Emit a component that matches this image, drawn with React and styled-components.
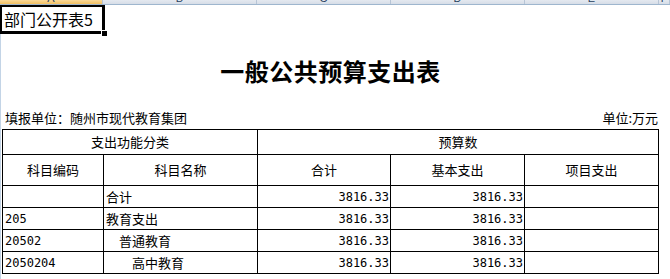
import React from 'react';
import styled, { createGlobalStyle } from 'styled-components';

const GlobalStyle = createGlobalStyle`
  html, body {
    margin: 0;
    padding: 0;
    background: #ffffff;
  }
  body {
    font-family: "Noto Sans CJK SC", "Noto Sans", sans-serif;
    color: #000;
  }
`;

const Page = styled.div`
  width: 670px;
  height: 279px;
  overflow: hidden;
  background: #fff;
`;

const HeaderStrip = styled.div`
  display: flex;
  height: 4px;
  border-bottom: 1px solid #9eb6ce;
  background: linear-gradient(#e4e9f0, #d6dde7);
  overflow: hidden;
`;

const ColHead = styled.div`
  width: ${p => p.$w}px;
  flex: none;
  display: flex;
  justify-content: center;
  align-items: flex-end;
  border-right: 1px solid #b7c5d6;
  background: ${p => (p.$active ? 'linear-gradient(#f9d99a, #f2c062)' : 'transparent')};
  font-family: "Liberation Sans", sans-serif;
  font-size: 11px;
  line-height: 11px;
  color: #27415f;
  overflow: hidden;
  box-sizing: border-box;
`;

const Sheet = styled.div`
  border-left: 1px solid #c3d4e6;
  padding-left: 1px;
  height: 274px;
`;

const TopRow = styled.div`
  height: 30px;
  margin-left: -2px;
`;

const ActiveCell = styled.div`
  position: relative;
  width: 98px;
  height: 24px;
  border: 2px solid #000;
  border-right-width: 3px;
  border-bottom-width: 3px;
  font-size: 16px;
  line-height: 24px;
  padding-left: 2px;
  white-space: nowrap;
`;

const FillHandle = styled.span`
  position: absolute;
  right: -6px;
  bottom: -6px;
  width: 5px;
  height: 5px;
  background: #000;
  border: 1px solid #fff;
`;

const Title = styled.h1`
  margin: 0;
  height: 70px;
  width: 657px;
  display: flex;
  align-items: center;
  justify-content: center;
  font-size: 24px;
  font-weight: 700;
  letter-spacing: 0.5px;
`;

const InfoRow = styled.div`
  width: 656px;
  height: 24px;
  display: flex;
  justify-content: space-between;
  align-items: center;
  font-size: 13px;
  padding-left: 3px;
  box-sizing: border-box;
`;

const Table = styled.table`
  border-collapse: collapse;
  table-layout: fixed;
  width: 657px;
  font-size: 13px;
`;

const Row = styled.tr`
  height: ${p => p.$h}px;
`;

const Cell = styled.td`
  border: 1px solid #000;
  padding: 0 ${p => (p.$align === 'right' ? 1 : 2)}px 0 ${p => 2 + (p.$indent || 0)}px;
  text-align: ${p => p.$align || 'left'};
  font-family: ${p =>
    p.$mono ? '"DejaVu Sans Mono", monospace' : '"Noto Sans CJK SC", sans-serif'};
  font-size: ${p => (p.$mono ? '12px' : '13px')};
  line-height: 16px;
  white-space: nowrap;
  overflow: hidden;
  vertical-align: middle;
`;

const HeadCell = styled(Cell).attrs({ as: 'th' })`
  font-weight: 400;
  text-align: center;
`;

const columns = [
  { key: 'A', w: 103, active: true },
  { key: 'B', w: 154 },
  { key: 'C', w: 134 },
  { key: 'D', w: 134 },
  { key: 'E', w: 134 },
  { key: 'F', w: 11 },
];

const rows = [
  { code: '', name: '合计', indent: 0, total: '3816.33', basic: '3816.33' },
  { code: '205', name: '教育支出', indent: 0, total: '3816.33', basic: '3816.33' },
  { code: '20502', name: '普通教育', indent: 13, total: '3816.33', basic: '3816.33' },
  { code: '2050204', name: '高中教育', indent: 26, total: '3816.33', basic: '3816.33' },
];

export default function App() {
  return (
    <Page>
      <GlobalStyle />
      <HeaderStrip>
        {columns.map(c => (
          <ColHead key={c.key} $w={c.w} $active={c.active}>
            {c.key}
          </ColHead>
        ))}
      </HeaderStrip>
      <Sheet>
        <TopRow>
          <ActiveCell>
            部门公开表5
            <FillHandle />
          </ActiveCell>
        </TopRow>
        <Title>一般公共预算支出表</Title>
        <InfoRow>
          <span>填报单位：随州市现代教育集团</span>
          <span>单位:万元</span>
        </InfoRow>
        <Table>
          <colgroup>
            <col style={{ width: 101 }} />
            <col style={{ width: 154 }} />
            <col style={{ width: 133 }} />
            <col style={{ width: 134 }} />
            <col style={{ width: 134 }} />
          </colgroup>
          <thead>
            <Row $h={25}>
              <HeadCell colSpan={2}>支出功能分类</HeadCell>
              <HeadCell colSpan={3}>预算数</HeadCell>
            </Row>
            <Row $h={31}>
              <HeadCell>科目编码</HeadCell>
              <HeadCell>科目名称</HeadCell>
              <HeadCell>合计</HeadCell>
              <HeadCell>基本支出</HeadCell>
              <HeadCell>项目支出</HeadCell>
            </Row>
          </thead>
          <tbody>
            {rows.map((r, i) => (
              <Row key={i} $h={22}>
                <Cell $mono>{r.code}</Cell>
                <Cell $indent={r.indent}>{r.name}</Cell>
                <Cell $mono $align="right">{r.total}</Cell>
                <Cell $mono $align="right">{r.basic}</Cell>
                <Cell />
              </Row>
            ))}
          </tbody>
        </Table>
      </Sheet>
    </Page>
  );
}
